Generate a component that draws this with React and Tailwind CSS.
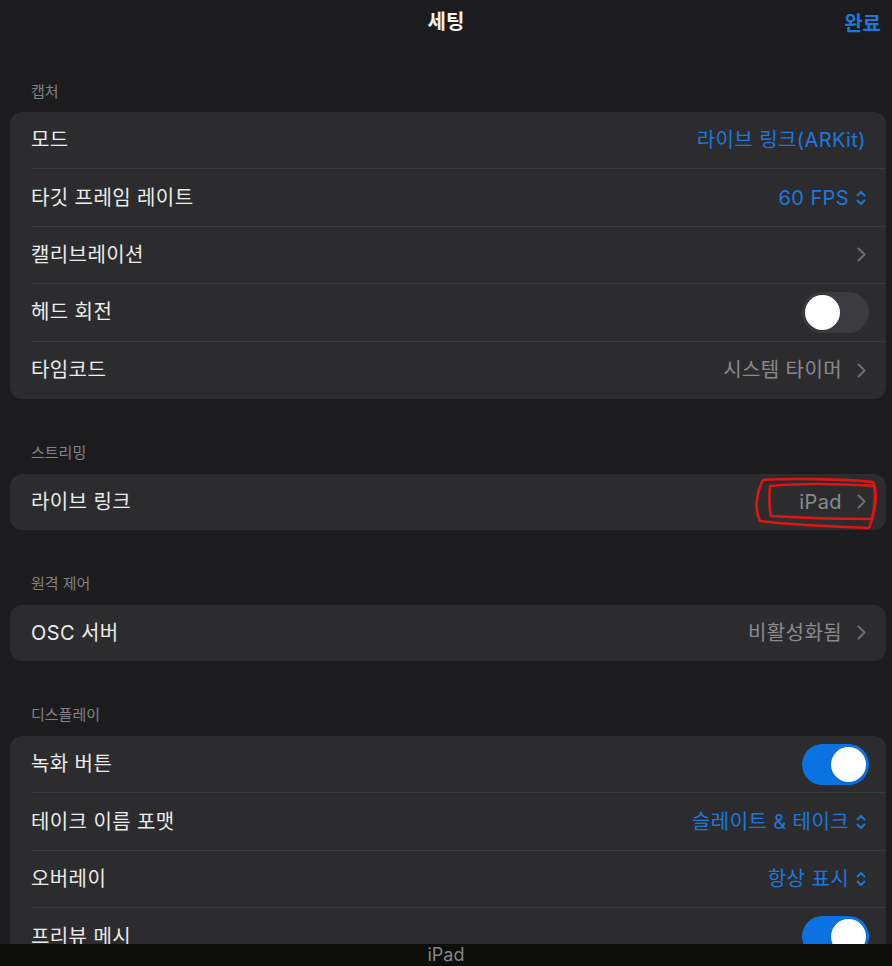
import React from 'react';

const Chevron = () => (
    <svg className="w-[9px] h-[15px] ml-[15px]" viewBox="0 0 9 15" fill="none" stroke="#6e6e73" strokeWidth="2" strokeLinecap="round" strokeLinejoin="round">
        <path d="M1.5 1.5l6 6-6 6" />
    </svg>
);

const UpDown = () => (
    <svg className="w-[10px] h-[16px] ml-[7px]" viewBox="0 0 10 16" fill="none" stroke="#1e78dc" strokeWidth="1.8" strokeLinecap="round" strokeLinejoin="round">
        <path d="M1.5 5.5L5 2l3.5 3.5" />
        <path d="M1.5 10.5L5 14l3.5-3.5" />
    </svg>
);

const Toggle = ({ on }) => (
    <div className={`w-[67px] h-[41px] rounded-full p-[3px] flex ${on ? 'bg-[#0b72e3] justify-end' : 'bg-[#3c3c40] justify-start'}`}>
        <div className="w-[35px] h-[35px] rounded-full bg-white shadow" />
    </div>
);

const Row = ({ label, last, single, children }) => (
    <div className="pl-[21px]">
        <div className={`flex items-center justify-between pr-[20px] ${single ? 'h-[56px]' : 'h-[57.4px]'} ${last ? '' : 'border-b border-[#3a3a3c]'}`}>
            <span className="text-[20px] tracking-[0.02em] text-[#ececec]">{label}</span>
            <div className="flex items-center">{children}</div>
        </div>
    </div>
);

const Section = ({ title, first, extra, children }) => (
    <div className={first ? '' : 'mt-[38px]'}>
        <div className="h-[37px] flex items-end pb-[9px] pl-[31px] text-[15px] text-[#828287]">{title}</div>
        <div className="relative ml-[10px] mr-[6px] rounded-[12px] bg-[#2c2c2e]">
            {children}
            {extra}
        </div>
    </div>
);

const Blue = ({ children }) => <span className="text-[20px] tracking-[0.02em] text-[#1e78dc]">{children}</span>;
const Gray = ({ children }) => <span className="text-[20px] tracking-[0.02em] text-[#8a8a8e]">{children}</span>;

// hand-drawn red mark around the iPad value
const Scribble = () => (
    <svg className="absolute left-[742px] top-[2px] w-[130px] h-[58px] pointer-events-none" viewBox="0 0 130 58" fill="none" stroke="#e01414" strokeWidth="2.6" strokeLinecap="round" strokeLinejoin="round">
        <path d="M11 4 C40 2 90 3 121 6 C126 16 124 34 117 52 C90 51 40 49 8 45 C3 35 3 20 11 4" />
        <path d="M18 10 C17 20 17 30 19 40 C50 42 90 43 120 43 C123 30 124 20 122 10 C90 8 50 7 18 10" />
    </svg>
);

export default function App() {
    return (
        <div className="w-[892px] h-[966px] bg-[#1c1c1e] flex flex-col overflow-hidden" style={{ fontFamily: '"Inter", "Noto Sans CJK KR", sans-serif' }}>
            <div className="h-[944px] overflow-hidden">
                <div className="h-[75px]">
                    <div className="relative h-[44px] flex items-center justify-center">
                        <span className="text-[20px] font-semibold text-[#f2f2f2]">세팅</span>
                        <span className="absolute right-[11px] top-[9px] text-[20px] font-semibold text-[#1e78dc]">완료</span>
                    </div>
                </div>

                <Section title="캡처" first>
                    <Row label="모드"><Blue>라이브 링크(ARKit)</Blue></Row>
                    <Row label="타깃 프레임 레이트"><Blue>60 FPS</Blue><UpDown /></Row>
                    <Row label="캘리브레이션"><Chevron /></Row>
                    <Row label="헤드 회전"><div className="-mr-[3px]"><Toggle on={false} /></div></Row>
                    <Row label="타임코드" last><Gray>시스템 타이머</Gray><Chevron /></Row>
                </Section>

                <Section title="스트리밍" extra={<Scribble />}>
                    <Row label="라이브 링크" last single><Gray>iPad</Gray><Chevron /></Row>
                </Section>

                <Section title="원격 제어">
                    <Row label="OSC 서버" last single><Gray>비활성화됨</Gray><Chevron /></Row>
                </Section>

                <Section title="디스플레이">
                    <Row label="녹화 버튼"><div className="-mr-[3px]"><Toggle on /></div></Row>
                    <Row label="테이크 이름 포맷"><Blue>슬레이트 &amp; 테이크</Blue><UpDown /></Row>
                    <Row label="오버레이"><Blue>항상 표시</Blue><UpDown /></Row>
                    <Row label="프리뷰 메시" last><div className="-mr-[3px]"><Toggle on /></div></Row>
                </Section>
            </div>
            <div className="h-[22px] bg-[#0d0d0b] flex items-center justify-center">
                <span className="text-[18px] leading-none text-[#858585]">iPad</span>
            </div>
        </div>
    );
}
